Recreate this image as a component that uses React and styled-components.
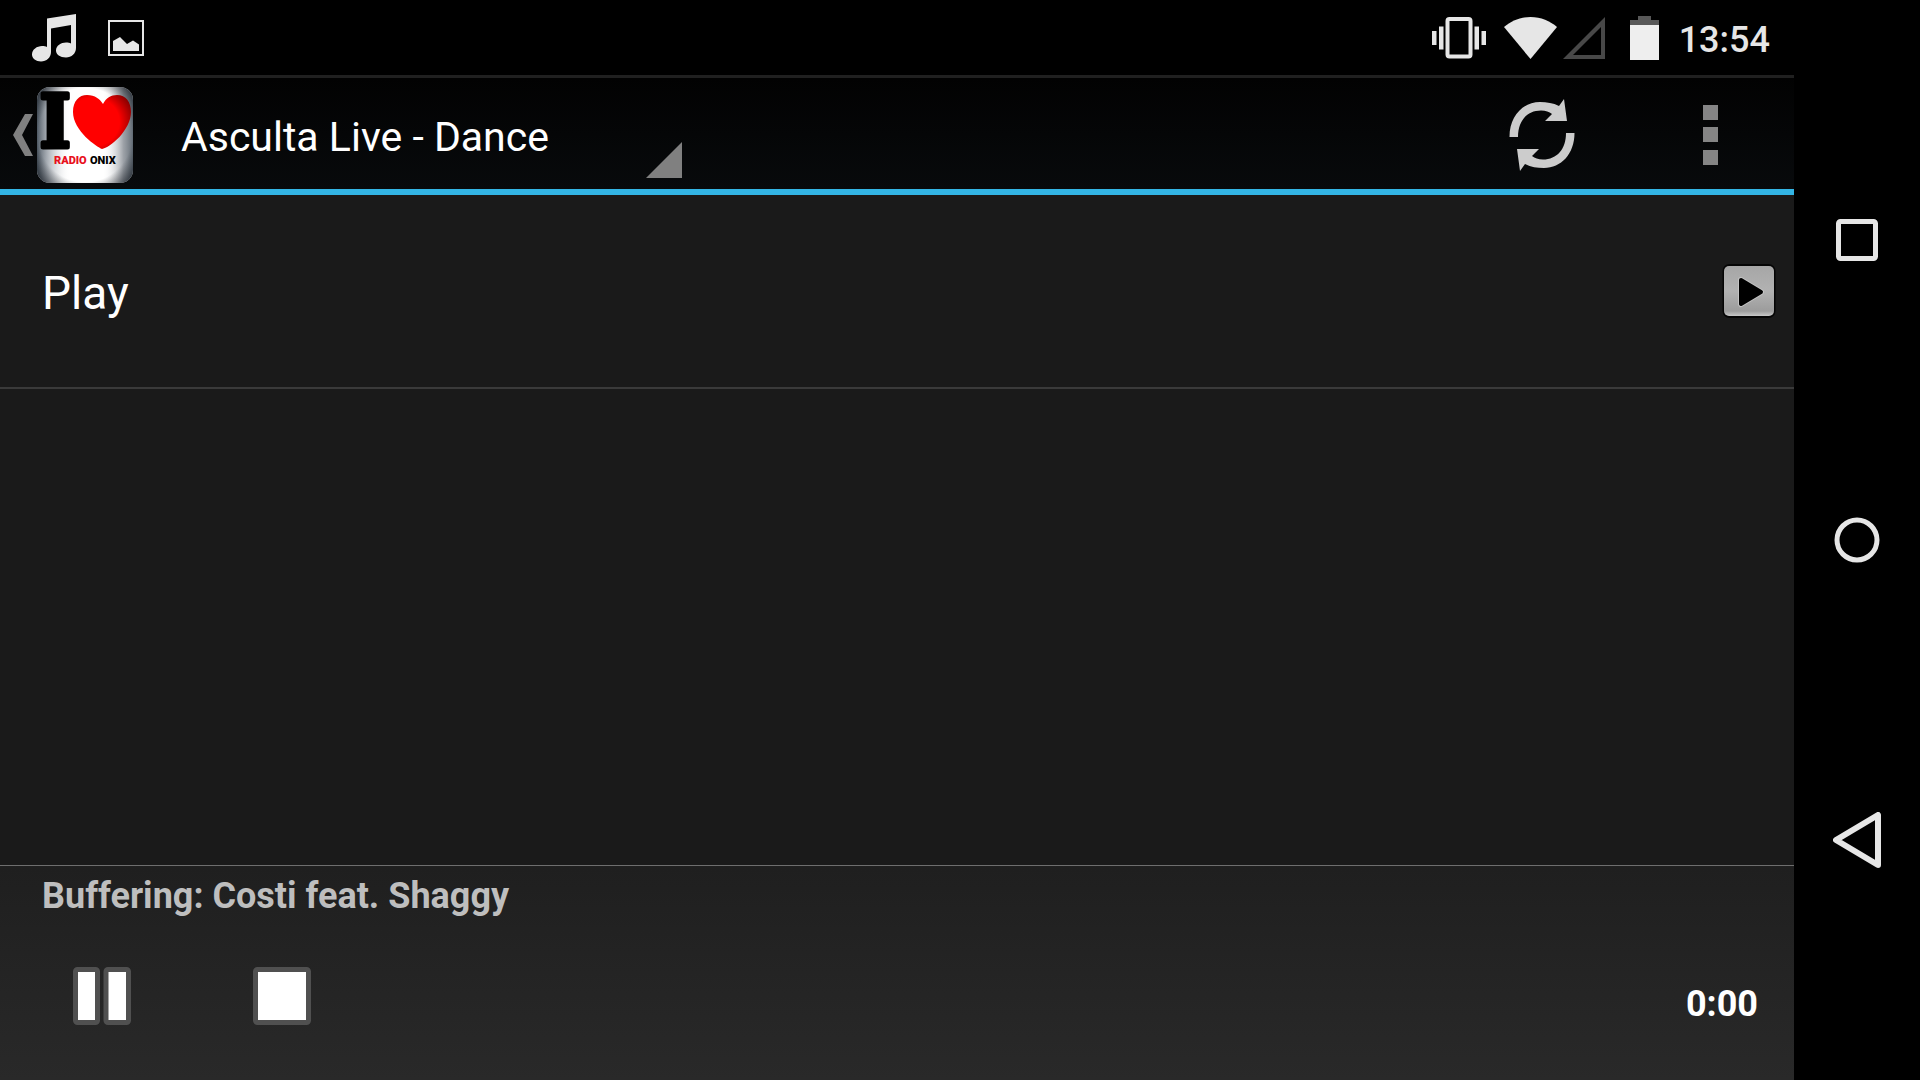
import styled, { createGlobalStyle } from "styled-components";

const GlobalStyle = createGlobalStyle`
  * {
    box-sizing: border-box;
  }

  body {
    margin: 0;
    background-color: #000;
    color: #fff;
    font-family: Roboto, sans-serif;
  }
`;

const Page = styled.div`
  display: grid;
  grid-template-columns: 1fr 126px;
  min-height: 100vh;
`;

const Screen = styled.div`
  display: flex;
  flex-direction: column;
  background-color: #1a1a1a;
`;

const StatusBar = styled.header`
  display: flex;
  justify-content: space-between;
  align-items: center;
  height: 78px;
  padding: 0 24px 0 32px;
  background-color: #000;
  border-bottom: 3px solid #202020;
`;

const StatusGroup = styled.div`
  display: flex;
  align-items: center;
  gap: ${(props) => props.$gap}px;
`;

const Clock = styled.time`
  padding-top: 4px;
  color: #e6e6e6;
  font-size: 36px;
  font-weight: 500;
  line-height: 42px;
`;

const ActionBar = styled.div`
  display: flex;
  justify-content: space-between;
  height: 117px;
  background: linear-gradient(#020202, #080a0c);
  border-bottom: 6px solid #33b5e5;
`;

const ActionGroup = styled.div`
  display: flex;
  align-items: center;
`;

const IconButton = styled.button`
  display: flex;
  justify-content: center;
  align-items: center;
  width: ${(props) => props.$width}px;
  height: 100%;
  padding: 0;
  background: none;
  border: none;
  cursor: pointer;
`;

const ActionButton = styled(IconButton)`
  padding-top: 3px;
`;

const UpButton = styled(ActionButton)`
  justify-content: flex-start;
  gap: 4px;
  padding-left: 13px;
`;

const Logo = styled.svg`
  overflow: visible;
`;

const Spinner = styled.div`
  position: relative;
  margin-left: 48px;
`;

const StationSelect = styled.select`
  appearance: none;
  display: block;
  width: 501px;
  height: 88px;
  padding: 6px 48px 0 0;
  background: none;
  border: none;
  color: #fff;
  font-family: inherit;
  font-size: 41px;
  line-height: 48px;
`;

const SpinnerCorner = styled.svg`
  position: absolute;
  right: 0;
  bottom: 0;
  pointer-events: none;
`;

const TrackList = styled.ul`
  flex: 1;
  margin: 0;
  padding: 0;
  list-style: none;
`;

const TrackRow = styled.li`
  display: flex;
  justify-content: space-between;
  align-items: center;
  height: 194px;
  padding: 0 18px 0 42px;
  border-bottom: 2px solid #3a3a3a;
`;

const TrackName = styled.span`
  padding-top: 4px;
  font-size: 46px;
  line-height: 56px;
`;

const Player = styled.footer`
  height: 215px;
  padding: 8px 36px 0 42px;
  background: linear-gradient(#1f1f1f, #292929);
  border-top: 1px solid #6e6e6e;
`;

const NowPlaying = styled.p`
  margin: 0;
  color: #bebebe;
  font-size: 36px;
  font-weight: 700;
  line-height: 44px;
`;

const Controls = styled.div`
  display: flex;
  align-items: center;
  height: 156px;
`;

const PlayerButton = styled(IconButton)`
  width: 120px;
  height: 120px;
  margin-right: 60px;
`;

const Elapsed = styled.output`
  margin-left: auto;
  padding-top: 16px;
  font-size: 36px;
  font-weight: 700;
  line-height: 44px;
`;

const NavBar = styled.nav`
  display: flex;
  flex-direction: column;
  padding: 90px 0;
  background-color: #000;
`;

const NavButton = styled(IconButton)`
  flex: 1;
  width: 100%;
`;

function MusicIcon() {
  return (
    <svg width="44" height="48" viewBox="0 0 44 48" fill="#e6e6e6">
      <path d="M15 4.500L44 0v34c0 5.500-4.500 9.500-10 9.500-6 0-10-3-10-7 0-5 5-8 10-8 2 0 3.800.4 5 1V11L19 14.500V38c0 5.500-4.500 9.500-10 9.500-5 0-9-3-9-7 0-5 5-8.500 10-8.500 2 0 3.800.4 5 1z" />
    </svg>
  );
}

function PictureIcon() {
  return (
    <svg width="36" height="36" viewBox="0 0 36 36">
      <rect x="1" y="1" width="34" height="34" fill="none" stroke="#e6e6e6" strokeWidth="2" />
      <path d="M5 31V21l7-4 7 7 6-3.500 6 4V31z" fill="#e6e6e6" />
    </svg>
  );
}

function VibrateIcon() {
  return (
    <svg width="54" height="42" viewBox="0 0 54 42" fill="#e6e6e6">
      <rect x="15.500" y="2" width="23" height="37.500" rx="2" fill="none" stroke="#e6e6e6" strokeWidth="4" />
      <path d="M0 14h4.500v14H0zM7 9.500h4.500v23H7zM42.500 9.500H47v23h-4.500zM49.500 14H54v14h-4.500z" />
    </svg>
  );
}

function WifiIcon() {
  return (
    <svg width="53" height="42" viewBox="0 0 53 42">
      <path d="M0 10C7 4 16 0 26.500 0S46 4 53 10L26.500 42z" fill="#e6e6e6" />
    </svg>
  );
}

function SignalIcon() {
  return (
    <svg width="42" height="42" viewBox="0 0 42 42">
      <path d="M42 0v42H0zM38 10L10 38h28z" fill="#484848" fillRule="evenodd" />
    </svg>
  );
}

function BatteryIcon() {
  return (
    <svg width="29" height="44" viewBox="0 0 29 44">
      <path d="M0 4h8V0h13v4h8v6H0z" fill="#585858" />
      <path d="M0 9h29v35H0z" fill="#eee" />
    </svg>
  );
}

function UpIcon() {
  return (
    <svg width="20" height="42" viewBox="0 0 20 42">
      <path d="M12 0h8L9 21l11 21h-8L0 21z" fill="#808080" />
    </svg>
  );
}

function RadioLogo() {
  return (
    <Logo width="96" height="96" viewBox="0 0 96 96">
      <defs>
        <linearGradient id="sides">
          <stop offset="0" stopColor="#3c4854" stopOpacity="0.9" />
          <stop offset="0.15" stopColor="#8a929c" stopOpacity="0.5" />
          <stop offset="0.35" stopColor="#fff" stopOpacity="0" />
          <stop offset="0.68" stopColor="#fff" stopOpacity="0" />
          <stop offset="0.9" stopColor="#5c646e" stopOpacity="0.6" />
          <stop offset="1" stopColor="#3c4854" stopOpacity="0.8" />
        </linearGradient>
        <radialGradient id="corners" cx="0.5" cy="0.5" r="0.72">
          <stop offset="0.68" stopColor="#10151c" stopOpacity="0" />
          <stop offset="1" stopColor="#10151c" stopOpacity="0.85" />
        </radialGradient>
        <radialGradient id="heart" cx="0.35" cy="0.5" r="0.75">
          <stop offset="0.6" stopColor="#f00" />
          <stop offset="1" stopColor="#700" />
        </radialGradient>
      </defs>
      <rect width="96" height="96" rx="13" fill="#fff" />
      <rect width="96" height="96" rx="13" fill="url(#sides)" />
      <rect width="96" height="96" rx="13" fill="url(#corners)" />
      <text
        x="3"
        y="60"
        fontFamily="'DejaVu Serif Condensed', 'DejaVu Serif', serif"
        fontSize="72"
        fontWeight="700"
        stroke="#000"
        strokeWidth="5"
        strokeLinejoin="round"
      >
        I
      </text>
      <path
        d="M65 62C60 60 36 44 36 25 36 14 42 8 50 8c8 0 13 4 16 9 3-6 8-9 14-9 9 0 14 7 14 17 0 18-21 36-29 37z"
        fill="url(#heart)"
      />
      <text x="17" y="77" fill="#e8101c" fontFamily="Roboto, sans-serif" fontSize="11" fontWeight="900">
        RADIO
      </text>
      <text x="53" y="77" fontFamily="Roboto, sans-serif" fontSize="11" fontWeight="900">
        ONIX
      </text>
    </Logo>
  );
}

function RefreshIcon() {
  return (
    <svg width="66" height="72" viewBox="0 0 66 72" fill="#ccc">
      <path d="M0.500 38C0.500 17 14 3 31 3c7 0 13 1 19 4l5-7 3 22H36l7-7c-3-2-6-3.500-11-3.500C18 11.500 9 22 9 38z" />
      <path d="M65.500 34c0 21-13.500 35-30.500 35-7 0-13-1-19-4l-5 7-3-22h22l-7 7c3 2 6 3.500 11 3.500 14 0 23-10.500 23-26.500z" />
    </svg>
  );
}

function OverflowIcon() {
  return (
    <svg width="15" height="60" viewBox="0 0 15 60" fill="#858585">
      <path d="M0 0h15v15H0zM0 22h15v15H0zM0 45h15v15H0z" />
    </svg>
  );
}

function PlayIcon() {
  return (
    <svg width="54" height="54" viewBox="0 0 54 54">
      <defs>
        <linearGradient id="plate" x2="0" y2="1">
          <stop offset="0" stopColor="#a6a6a6" />
          <stop offset="0.5" stopColor="#b2b2b2" />
          <stop offset="0.9" stopColor="#9c9c9c" />
          <stop offset="1" stopColor="#c8c8c8" />
        </linearGradient>
      </defs>
      <rect x="0.500" y="0" width="53" height="54" rx="7" fill="#050505" />
      <rect x="2" y="2" width="50" height="50" rx="5" fill="url(#plate)" />
      <path
        d="M19 16l20 12-20 12z"
        stroke="#c4c4c4"
        strokeWidth="6"
        strokeLinejoin="round"
      />
      <path d="M19 16l20 12-20 12z" stroke="#000" strokeWidth="4" strokeLinejoin="round" />
    </svg>
  );
}

function PauseIcon() {
  return (
    <svg width="58" height="58" viewBox="0 0 58 58" fill="#fff" stroke="#505050" strokeWidth="5">
      <rect x="2.500" y="2.500" width="22" height="53" rx="2" />
      <rect x="33" y="2.500" width="22.500" height="53" rx="2" />
    </svg>
  );
}

function StopIcon() {
  return (
    <svg width="58" height="58" viewBox="0 0 58 58">
      <rect x="2.500" y="2.500" width="53" height="53" rx="2" fill="#fff" stroke="#505050" strokeWidth="5" />
    </svg>
  );
}

function RecentsIcon() {
  return (
    <svg width="42" height="42" viewBox="0 0 42 42">
      <rect x="2.500" y="2.500" width="37" height="37" rx="2" fill="none" stroke="#e6e6e6" strokeWidth="5" />
    </svg>
  );
}

function HomeIcon() {
  return (
    <svg width="46" height="46" viewBox="0 0 46 46">
      <circle cx="23" cy="23" r="20" fill="none" stroke="#e6e6e6" strokeWidth="5" />
    </svg>
  );
}

function BackIcon() {
  return (
    <svg width="48" height="56" viewBox="0 0 48 56">
      <path
        d="M45 3v50L3 28z"
        fill="none"
        stroke="#e6e6e6"
        strokeWidth="6"
        strokeLinejoin="round"
      />
    </svg>
  );
}

function App() {
  return (
    <>
      <GlobalStyle />
      <Page>
        <Screen>
          <StatusBar>
            <StatusGroup $gap={32}>
              <MusicIcon />
              <PictureIcon />
            </StatusGroup>
            <StatusGroup $gap={25}>
              <StatusGroup $gap={18}>
                <VibrateIcon />
                <StatusGroup $gap={6}>
                  <WifiIcon />
                  <SignalIcon />
                </StatusGroup>
              </StatusGroup>
              <StatusGroup $gap={20}>
                <BatteryIcon />
                <Clock>13:54</Clock>
              </StatusGroup>
            </StatusGroup>
          </StatusBar>

          <ActionBar>
            <ActionGroup>
              <UpButton $width={133} aria-label="Navigate up">
                <UpIcon />
                <RadioLogo />
              </UpButton>
              <Spinner>
                <StationSelect aria-label="Station" defaultValue="dance">
                  <option value="dance">Asculta Live - Dance</option>
                </StationSelect>
                <SpinnerCorner width="36" height="36" viewBox="0 0 36 36">
                  <path d="M36 0v36H0z" fill="#808080" />
                </SpinnerCorner>
              </Spinner>
            </ActionGroup>
            <ActionGroup>
              <ActionButton $width={168} aria-label="Refresh">
                <RefreshIcon />
              </ActionButton>
              <ActionButton $width={168} aria-label="More options">
                <OverflowIcon />
              </ActionButton>
            </ActionGroup>
          </ActionBar>

          <TrackList>
            <TrackRow>
              <TrackName>Play</TrackName>
              <IconButton $width={54} aria-label="Play">
                <PlayIcon />
              </IconButton>
            </TrackRow>
          </TrackList>

          <Player>
            <NowPlaying>Buffering: Costi feat. Shaggy</NowPlaying>
            <Controls>
              <PlayerButton aria-label="Pause">
                <PauseIcon />
              </PlayerButton>
              <PlayerButton aria-label="Stop">
                <StopIcon />
              </PlayerButton>
              <Elapsed>0:00</Elapsed>
            </Controls>
          </Player>
        </Screen>

        <NavBar>
          <NavButton aria-label="Recent apps">
            <RecentsIcon />
          </NavButton>
          <NavButton aria-label="Home">
            <HomeIcon />
          </NavButton>
          <NavButton aria-label="Back">
            <BackIcon />
          </NavButton>
        </NavBar>
      </Page>
    </>
  );
}

export default App;
